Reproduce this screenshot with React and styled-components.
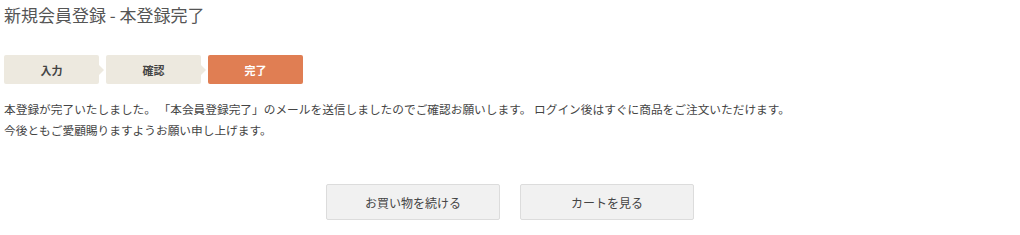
import React from 'react';
import styled, { createGlobalStyle } from 'styled-components';

const GlobalStyle = createGlobalStyle`
  body {
    margin: 0;
    background: #fff;
    font-family: "Noto Sans CJK JP", "Noto Sans", sans-serif;
    color: #444;
  }
`;

const Page = styled.div`
  width: 1020px;
  padding: 3px 4px 0;
  box-sizing: border-box;
`;

const Title = styled.h1`
  margin: 0;
  font-size: 17px;
  font-weight: 400;
  line-height: 24px;
  color: #555;
`;

const Steps = styled.ol`
  display: flex;
  gap: 7px;
  list-style: none;
  margin: 28px 0 0;
  padding: 0;
`;

const Step = styled.li`
  position: relative;
  width: 95px;
  height: 29px;
  display: flex;
  align-items: center;
  justify-content: center;
  border-radius: 2px;
  font-size: 11px;
  font-weight: 700;
  background: ${({ active }) => (active ? '#e07e53' : '#ede9df')};
  color: ${({ active }) => (active ? '#fff' : '#444')};

  &::after {
    content: ${({ arrow }) => (arrow ? "''" : 'none')};
    position: absolute;
    right: -5px;
    top: 50%;
    margin-top: -5px;
    border-style: solid;
    border-width: 5px 0 5px 5px;
    border-color: transparent transparent transparent #ede9df;
  }
`;

const Message = styled.div`
  margin-top: 14px;
  font-size: 11.7px;
  line-height: 21px;
  color: #444;

  p {
    margin: 0;
  }
`;

const Actions = styled.div`
  display: flex;
  justify-content: center;
  gap: 20px;
  margin-top: 44px;
`;

const Button = styled.button`
  width: 174px;
  height: 36px;
  background: #f1f1f1;
  border: 1px solid #dcdcdc;
  border-radius: 2px;
  font-family: inherit;
  font-size: 12px;
  color: #444;
  cursor: pointer;
`;

const steps = ['入力', '確認', '完了'];

const App = () => (
  <Page>
    <GlobalStyle />
    <Title>新規会員登録 - 本登録完了</Title>
    <Steps>
      {steps.map((label, i) => (
        <Step key={label} active={i === 2} arrow={i < 2}>
          {label}
        </Step>
      ))}
    </Steps>
    <Message>
      <p>本登録が完了いたしました。 「本会員登録完了」のメールを送信しましたのでご確認お願いします。 ログイン後はすぐに商品をご注文いただけます。</p>
      <p>今後ともご愛顧賜りますようお願い申し上げます。</p>
    </Message>
    <Actions>
      <Button>お買い物を続ける</Button>
      <Button>カートを見る</Button>
    </Actions>
  </Page>
);

export default App;
